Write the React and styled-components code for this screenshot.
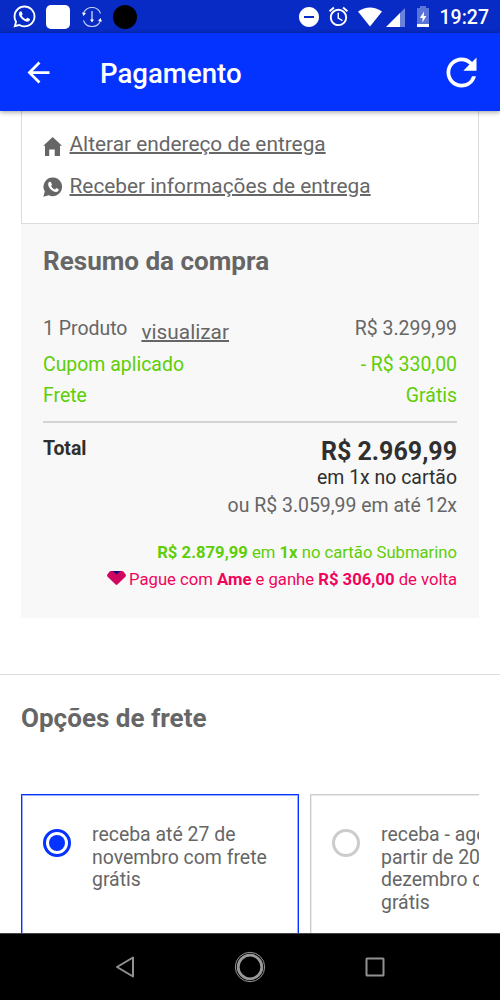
import styled, { createGlobalStyle } from "styled-components";
import { FaWhatsapp } from "react-icons/fa";
import {
  MdAlarm,
  MdArrowBack,
  MdDoNotDisturbOn,
  MdRefresh,
} from "react-icons/md";

const shippingOptions = [
  {
    id: 1,
    lines: ["receba até 27 de", "novembro com frete", "grátis"],
    selected: true,
  },
  {
    id: 2,
    lines: ["receba - agendada a", "partir de 20 de", "dezembro com frete", "grátis"],
    selected: false,
  },
];

const StatusBar = () => (
  <StatusBarStyled>
    <Notifications>
      <FaWhatsapp size={25} />
      <NotificationSquare />
      <svg width="20" height="20" viewBox="0 0 20 20" fill="none" stroke="#c3cdf5" strokeWidth="1.1">
        <path d="M1.500 6.500a9 9 0 0 1 17 0M18.500 13.500a9 9 0 0 1-17 0" />
        <path d="M10 4v10" strokeWidth="1.4" />
        <path d="M8 12.500h4l-2 3zM0 5.500l4 .5-2.500 3zM20 14.500l-4-.5 2.500-3z" fill="#fff" stroke="none" />
      </svg>
      <NotificationDot />
    </Notifications>
    <SystemIcons>
      <MdDoNotDisturbOn size={24} />
      <MdAlarm size={23} />
      <svg width="24" height="20" viewBox="0 0 24 20">
        <path d="M0 4.5Q12-3.5 24 4.5L12 19.5z" fill="#fff" />
      </svg>
      <svg width="19" height="19" viewBox="0 0 19 19">
        <path d="M19 0v19h-5V5z" fill="#6b82dd" />
        <path d="M14 5v14H0z" fill="#fff" />
      </svg>
      <svg width="12" height="21" viewBox="0 0 12 21">
        <path d="M3 0h6v2h3v16H0V2h3z" fill="#5b74da" />
        <path d="M0 18h12v3H0zM7 5.5 2.8 12h2.7v4.5L9.3 10H6.8z" fill="#fff" />
      </svg>
      <Clock>19:27</Clock>
    </SystemIcons>
  </StatusBarStyled>
);

const HomeIcon = () => (
  <svg width="20" height="21" viewBox="0 0 20 21" fill="#666">
    <path d="M9.700 2 19 10.700h-2V21h-5.300v-6.500H6.200V21H2V10.700H.3z" />
  </svg>
);

const WhatsappIcon = () => (
  <svg width="20" height="20" viewBox="0 0 20 20">
    <path d="M10.300.5a9.300 9.300 0 1 1-4.500 17.700L.3 19.700l1.500-5.200A9.300 9.300 0 0 1 10.300.5z" fill="#666" />
    <path
      d="M5.200 6.300C5.800 4.600 7.200 4.300 8 5.300l.9 2.100c.1.600-.4.900-.8 1.500.9 1.800 2.200 3 3.900 3.600l1.200-1.200c.4-.3 2 .6 2.500 1 .2 1.500-1 2.700-2.700 2.800-4.100-.4-8.400-5.100-7.800-8.800z"
      fill="#fff"
    />
  </svg>
);

const Summary = () => (
  <SummaryStyled>
    <Title>Resumo da compra</Title>
    <SummaryRows>
      <SummaryRow $height={38}>
        <Product>
          <span>1 Produto</span>
          <ViewLink href="#">visualizar</ViewLink>
        </Product>
        <span>R$ 3.299,99</span>
      </SummaryRow>
      <SummaryRow $height={34} $green>
        <span>Cupom aplicado</span>
        <span>- R$ 330,00</span>
      </SummaryRow>
      <SummaryRow $height={28} $green>
        <span>Frete</span>
        <span>Grátis</span>
      </SummaryRow>
    </SummaryRows>
    <TotalRow>
      <TotalLabel>Total</TotalLabel>
      <TotalValues>
        <TotalPrice>R$ 2.969,99</TotalPrice>
        <TotalMethod>em 1x no cartão</TotalMethod>
        <Installments>ou R$ 3.059,99 em até 12x</Installments>
      </TotalValues>
    </TotalRow>
    <Offers>
      <Offer $color="#5ece07">
        <b>R$ 2.879,99</b> em <b>1x</b> no cartão Submarino
      </Offer>
      <Offer $color="#f0045c">
        <AmeIcon width="19" height="14" viewBox="0 0 19 14">
          <path d="M4 0h11q1 0 1.600.7l2 2.800q.8 1.200-.2 2.200l-8 7.800q-.9.800-1.800 0l-8-7.800q-1-1-.2-2.200l2-2.800Q3 0 4 0z" fill="#cf0560" />
          <path d="M5.500 0h8L9.500 3.500z" fill="#1c0a85" />
        </AmeIcon>
        Pague com <b>Ame</b> e ganhe <b>R$ 306,00</b> de volta
      </Offer>
    </Offers>
  </SummaryStyled>
);

const Shipping = () => (
  <ShippingStyled>
    <Title>Opções de frete</Title>
    <ShippingList>
      {shippingOptions.map((option) => (
        <ShippingCard key={option.id} $selected={option.selected}>
          <Radio $selected={option.selected} />
          <ShippingText>
            {option.lines.map((line) => (
              <span key={line}>{line}</span>
            ))}
          </ShippingText>
        </ShippingCard>
      ))}
    </ShippingList>
  </ShippingStyled>
);

const NavigationBar = () => (
  <NavigationBarStyled>
    <svg width="20" height="22" viewBox="0 0 20 22" fill="none" stroke="#919191" strokeWidth="2">
      <path d="M18 1.500v19L2 11z" strokeLinejoin="round" />
    </svg>
    <svg width="32" height="32" viewBox="0 0 32 32" fill="none" stroke="#999">
      <circle cx="16" cy="16" r="14.700" strokeWidth="1" />
      <circle cx="16" cy="16" r="11.800" strokeWidth="2.800" />
    </svg>
    <svg width="20" height="20" viewBox="0 0 20 20" fill="none" stroke="#919191" strokeWidth="2">
      <rect x="1.500" y="1.500" width="17" height="17" rx="0.500" />
    </svg>
  </NavigationBarStyled>
);

export default function App() {
  return (
    <>
      <GlobalStyle />
      <Screen>
        <StatusBar />
        <Header>
          <MdArrowBack size={33} />
          <h1>Pagamento</h1>
          <MdRefresh size={45} />
        </Header>
        <Content>
          <AddressCard>
            <AddressLink href="#">
              <HomeIcon />
              <span>Alterar endereço de entrega</span>
            </AddressLink>
            <AddressLink href="#">
              <WhatsappIcon />
              <span>Receber informações de entrega</span>
            </AddressLink>
          </AddressCard>
          <Summary />
          <Shipping />
        </Content>
        <NavigationBar />
      </Screen>
    </>
  );
}

const GlobalStyle = createGlobalStyle`
  * {
    box-sizing: border-box;
  }

  body {
    margin: 0;
    background: #fff;
    font-family: Roboto, sans-serif;
    color: #666;
  }

  svg {
    flex-shrink: 0;
  }
`;

const Screen = styled.div`
  display: flex;
  flex-direction: column;
  width: 500px;
  height: 1000px;
  overflow: hidden;
`;

const StatusBarStyled = styled.div`
  display: flex;
  justify-content: space-between;
  align-items: center;
  flex-shrink: 0;
  height: 33px;
  padding: 0 11px 0 12px;
  background: #082bc5;
  color: #fff;
`;

const Notifications = styled.div`
  display: flex;
  align-items: center;
  gap: 12px;
`;

const NotificationSquare = styled.div`
  width: 24px;
  height: 24px;
  margin-left: -3px;
  border-radius: 5px;
  background: #fff;
`;

const NotificationDot = styled.div`
  width: 24px;
  height: 24px;
  margin-left: -1px;
  border-radius: 50%;
  background: #000;
`;

const SystemIcons = styled.div`
  display: flex;
  align-items: center;
  height: 33px;

  svg:nth-of-type(2) {
    margin-left: 6px;
  }

  svg:nth-of-type(3) {
    margin-left: 8px;
  }

  svg:nth-of-type(4) {
    margin-left: 4px;
    margin-top: 2px;
  }

  svg:nth-of-type(5) {
    margin-left: 12px;
  }
`;

const Clock = styled.span`
  margin-left: 11px;
  padding-top: 2px;
  font-size: 19.5px;
  font-weight: 500;
  line-height: 32px;
`;

const Header = styled.header`
  position: relative;
  z-index: 1;
  display: flex;
  align-items: center;
  flex-shrink: 0;
  height: 78px;
  padding: 0 16px 0 22px;
  background: #0432ff;
  box-shadow: 0 1px 5px rgba(0, 0, 0, 0.4);
  color: #fff;

  h1 {
    flex: 1;
    margin: 3px 0 0 45px;
    font-size: 27.6px;
    font-weight: 500;
    line-height: 36px;
  }
`;

const Content = styled.main`
  flex: 1;
  min-height: 0;
  overflow: hidden;
`;

const AddressCard = styled.section`
  height: 113px;
  margin: 0 21px;
  padding: 13px 21px 0;
  border: 1px solid #dcdcdc;
  border-top: 0;
`;

const AddressLink = styled.a`
  display: flex;
  align-items: center;
  height: 42px;
  font-size: 20.83px;
  line-height: 40px;
  color: #666;
  text-decoration: none;

  svg {
    margin-right: 6.5px;
    overflow: visible;
  }

  span {
    padding-bottom: 2px;
    text-decoration: underline;
    text-decoration-thickness: 1.5px;
  }
`;

const Title = styled.h2`
  margin: 0;
  font-size: 26.05px;
  font-weight: 700;
  line-height: 28px;
`;

const SummaryStyled = styled.section`
  height: 394px;
  margin: 0 21px;
  padding: 23px 22px 0;
  background: #f8f8f8;
`;

const SummaryRows = styled.div`
  height: 148px;
  padding-top: 35px;
  border-bottom: 2px solid #d4d4d4;
`;

const SummaryRow = styled.div`
  display: flex;
  justify-content: space-between;
  height: ${(props) => props.$height}px;
  font-size: 19.44px;
  line-height: ${(props) => props.$height}px;
  color: ${(props) => (props.$green ? "#5ece07" : "#666")};
`;

const Product = styled.div`
  display: flex;
  gap: 14px;
`;

const ViewLink = styled.a`
  padding-top: 3px;
  font-size: 20.83px;
  color: #666;
  text-decoration-thickness: 1.5px;
`;

const TotalRow = styled.div`
  display: flex;
  justify-content: space-between;
  align-items: flex-start;
  padding-top: 14px;
`;

const TotalLabel = styled.strong`
  font-size: 19.44px;
  line-height: 24px;
  color: #2f2f2f;
`;

const TotalValues = styled.div`
  display: flex;
  flex-direction: column;
  align-items: flex-end;
  font-size: 19.44px;
`;

const TotalPrice = styled.strong`
  font-size: 25px;
  line-height: 30px;
  color: #2f2f2f;
`;

const TotalMethod = styled.span`
  line-height: 22px;
  color: #2f2f2f;
`;

const Installments = styled.span`
  line-height: 34px;
`;

const Offers = styled.div`
  display: flex;
  flex-direction: column;
  align-items: flex-end;
  padding-top: 16px;
`;

const Offer = styled.p`
  margin: 0;
  font-size: 16.67px;
  line-height: 27px;
  white-space: nowrap;
  color: ${(props) => props.$color};
`;

const AmeIcon = styled.svg`
  margin-right: 3px;
`;

const ShippingStyled = styled.section`
  margin-top: 56px;
  padding: 29px 21px 0;
  border-top: 1px solid #dcdcdc;
`;

const ShippingList = styled.div`
  display: flex;
  gap: 11px;
  margin-top: 62px;
  overflow: hidden;
`;

const ShippingCard = styled.div`
  display: flex;
  align-items: flex-start;
  flex: 0 0 278px;
  height: 180px;
  padding: 29px 21px;
  border: 1px solid ${(props) => (props.$selected ? "#0432ff" : "#ccc")};
  box-shadow: inset 0 0 0 1px
    ${(props) =>
      props.$selected ? "rgba(4, 50, 255, 0.4)" : "rgba(204, 204, 204, 0.4)"};
`;

const Radio = styled.div`
  flex-shrink: 0;
  width: 28px;
  height: 28px;
  margin: 5px 21px 0 0;
  padding: 3px;
  border: 3px solid ${(props) => (props.$selected ? "#0432ff" : "#ccc")};
  border-radius: 50%;
  background: ${(props) => (props.$selected ? "#0432ff" : "#fff")};
  background-clip: content-box;
`;

const ShippingText = styled.p`
  display: flex;
  flex-direction: column;
  margin: 0;
  font-size: 19.44px;
  line-height: 22.7px;
  white-space: nowrap;
`;

const NavigationBarStyled = styled.nav`
  display: flex;
  justify-content: center;
  align-items: center;
  gap: 99px;
  flex-shrink: 0;
  height: 67px;
  border-top: 1px solid #444;
  background: #000;
`;
